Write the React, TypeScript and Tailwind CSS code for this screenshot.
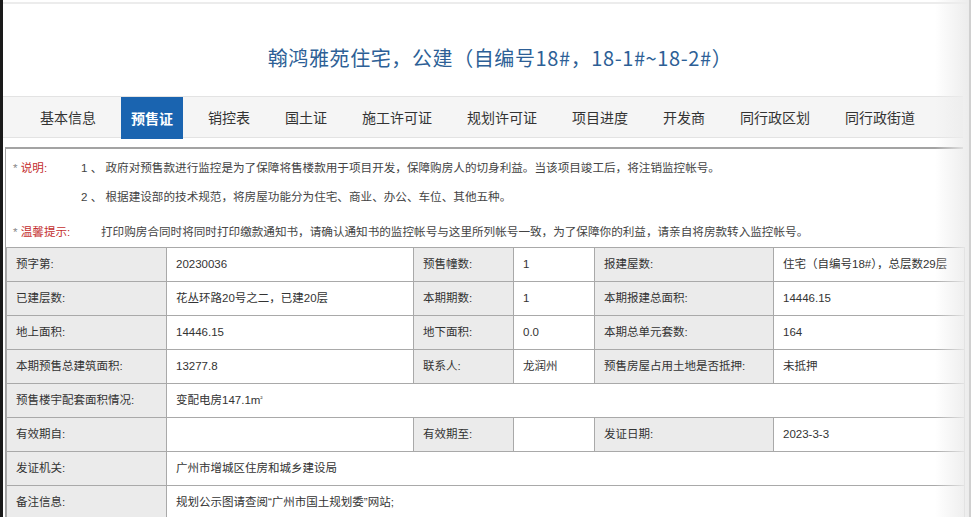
import React from "react";

const tabs = [
  "基本信息",
  "预售证",
  "销控表",
  "国土证",
  "施工许可证",
  "规划许可证",
  "项目进度",
  "开发商",
  "同行政区划",
  "同行政街道",
];

const label = "bg-[#ebebeb] border border-[#a9a9a9] px-[9px] text-left font-normal text-[#333] align-middle";
const value = "bg-white border border-[#a9a9a9] px-[9px] text-left text-[#333] align-middle";

function Notice() {
  return (
    <div className="text-[11.6px] text-[#444]">
      <div className="flex h-[32px] items-center pt-[6px]">
        <span className="w-[75px] shrink-0 pl-[7px] text-[#c42f2f]">
          <span className="text-[#888]">*</span> 说明:
        </span>
        <span>1 、 政府对预售款进行监控是为了保障将售楼款用于项目开发，保障购房人的切身利益。当该项目竣工后，将注销监控帐号。</span>
      </div>
      <div className="flex h-[28px] items-center pt-[4px]">
        <span className="w-[75px] shrink-0" />
        <span>2 、 根据建设部的技术规范，将房屋功能分为住宅、商业、办公、车位、其他五种。</span>
      </div>
      <div className="flex h-[38px] items-center pt-[8px]">
        <span className="w-[95px] shrink-0 pl-[7px] text-[#c42f2f]">
          <span className="text-[#888]">*</span> 温馨提示:
        </span>
        <span>打印购房合同时将同时打印缴款通知书，请确认通知书的监控帐号与这里所列帐号一致，为了保障你的利益，请亲自将房款转入监控帐号。</span>
      </div>
    </div>
  );
}

export default function App() {
  return (
    <div className="relative h-[517px] w-[971px] overflow-hidden border-l-[3px] border-[#1a1a1a] bg-white font-['Liberation_Sans','Noto_Sans_CJK_SC',sans-serif]">
      <div className="mt-[2px] h-[2px] bg-[#ececec]" />
      <div className="flex h-[92px] items-center justify-center pl-[26px] pt-[16px]">
        <h1 className="font-['Noto_Sans_CJK_SC',sans-serif] text-[20px] font-normal tracking-[0.6px] text-[#2d5f96]">
          翰鸿雅苑住宅，公建（自编号18#，18-1#~18-2#）
        </h1>
      </div>
      <div className="mr-[8px] flex h-[42px] items-stretch border-y border-[#e3e3e3] bg-[#f5f5f5] pl-[27px] font-['Noto_Sans_CJK_SC',sans-serif] text-[14px]">
        {tabs.map((t, i) => (
          <div
            key={t}
            className={
              i === 1
                ? "mr-[15px] -mb-[2px] flex items-center bg-[#1a64b0] px-[10px] font-bold text-white"
                : "mr-[15px] flex items-center px-[10px] text-[#333]"
            }
          >
            {t}
          </div>
        ))}
      </div>
      <div className="ml-[2px] mr-[8px] mt-[9px] border-l border-t-2 border-[#a3a3a3]">
        <Notice />
        <table className="w-[958px] table-fixed border-collapse text-[11.5px]">
          <colgroup>
            <col className="w-[160px]" />
            <col className="w-[247px]" />
            <col className="w-[100px]" />
            <col className="w-[81px]" />
            <col className="w-[179px]" />
            <col className="w-[191px]" />
          </colgroup>
          <tbody>
            <tr className="h-[34px]">
              <th className={label}>预字第:</th>
              <td className={value}>20230036</td>
              <th className={label}>预售幢数:</th>
              <td className={value}>1</td>
              <th className={label}>报建屋数:</th>
              <td className={value}>住宅（自编号18#），总层数29层</td>
            </tr>
            <tr className="h-[34px]">
              <th className={label}>已建层数:</th>
              <td className={value}>花丛环路20号之二，已建20层</td>
              <th className={label}>本期期数:</th>
              <td className={value}>1</td>
              <th className={label}>本期报建总面积:</th>
              <td className={value}>14446.15</td>
            </tr>
            <tr className="h-[34px]">
              <th className={label}>地上面积:</th>
              <td className={value}>14446.15</td>
              <th className={label}>地下面积:</th>
              <td className={value}>0.0</td>
              <th className={label}>本期总单元套数:</th>
              <td className={value}>164</td>
            </tr>
            <tr className="h-[34px]">
              <th className={label}>本期预售总建筑面积:</th>
              <td className={value}>13277.8</td>
              <th className={label}>联系人:</th>
              <td className={value}>龙润州</td>
              <th className={label}>预售房屋占用土地是否抵押:</th>
              <td className={value}>未抵押</td>
            </tr>
            <tr className="h-[34px]">
              <th className={label}>预售楼宇配套面积情况:</th>
              <td className={value} colSpan={5}>
                变配电房147.1m<sup className="text-[7px]">²</sup>
              </td>
            </tr>
            <tr className="h-[34px]">
              <th className={label}>有效期自:</th>
              <td className={value}></td>
              <th className={label}>有效期至:</th>
              <td className={value}></td>
              <th className={label}>发证日期:</th>
              <td className={value}>2023-3-3</td>
            </tr>
            <tr className="h-[34px]">
              <th className={label}>发证机关:</th>
              <td className={value} colSpan={5}>广州市增城区住房和城乡建设局</td>
            </tr>
            <tr className="h-[34px]">
              <th className={label}>备注信息:</th>
              <td className={value} colSpan={5}>规划公示图请查阅“广州市国土规划委”网站;</td>
            </tr>
          </tbody>
        </table>
      </div>
      <div className="pointer-events-none absolute right-0 top-0 h-full w-[36px] border-r-[2px] border-[#d0d0d0] bg-gradient-to-r from-transparent to-[#ececec]" />
    </div>
  );
}
